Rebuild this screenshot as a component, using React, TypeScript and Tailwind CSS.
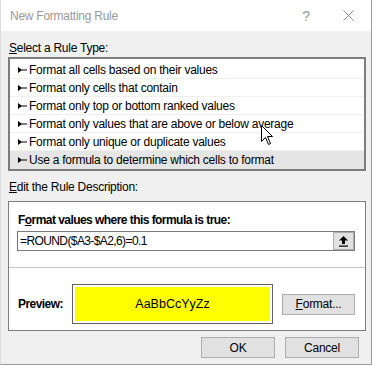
import React from "react";

const Bullet = () => (
  <svg width="9" height="6" viewBox="0 0 9 6" className="shrink-0">
    <polygon points="0,0 0,6 3.5,3.5 9,3.5 9,2.5 3.5,2.5" fill="#000" />
  </svg>
);

const rules = [
  "Format all cells based on their values",
  "Format only cells that contain",
  "Format only top or bottom ranked values",
  "Format only values that are above or below average",
  "Format only unique or duplicate values",
  "Use a formula to determine which cells to format",
];

export default function App() {
  return (
    <div
      className="w-[373px] h-[366px] bg-white overflow-hidden relative tracking-[-0.25px]"
      style={{ fontFamily: "'Liberation Sans', Arial, sans-serif" }}
    >
      <div className="w-[372px] h-[365px] flex flex-col border-l border-r border-b border-l-[#dcdcdc] border-r-[#9c9c9c] border-b-[#9c9c9c] bg-[#f0f0f0]">
        {/* Title bar */}
        <div className="h-[31px] bg-white flex items-center shrink-0">
          <div className="pl-[9px] text-[12px] text-[#999999] flex-1 leading-none">New Formatting Rule</div>
          <div className="w-[20px] text-center text-[14px] text-[#9a9a9a] mr-[27px] leading-none">?</div>
          <svg width="11" height="11" viewBox="0 0 11 11" className="mr-[17px]">
            <path d="M0.5,0.5 L10.5,10.5 M10.5,0.5 L0.5,10.5" stroke="#8a8a8a" strokeWidth="1" />
          </svg>
        </div>

        {/* Body */}
        <div className="flex flex-col px-[7px]">
          <div className="h-[26px] flex items-end pb-[3px] pl-[1px] text-[12px] text-black leading-none">
            <span><u>S</u>elect a Rule Type:</span>
          </div>
          <div className="w-[358px] border-2 border-[#7d7d7d] bg-white pt-[2px] pb-0">
            {rules.map((r, i) => (
              <div
                key={r}
                className={
                  "h-[18px] flex items-center gap-[2px] pl-[8px] text-[12px] text-black leading-none " +
                  (i === 5 ? "bg-[#e5e5e5]" : "border-b border-[#f0f0f0]")
                }
              >
                <Bullet />
                <span>{r}</span>
              </div>
            ))}
          </div>

          <div className="h-[30px] flex items-end pb-[8px] pl-[1px] text-[12px] text-black leading-none">
            <span><u>E</u>dit the Rule Description:</span>
          </div>

          <div className="w-[358px] h-[130px] border border-[#7d7d7d] bg-white flex flex-col">
            <div className="h-[29px] flex items-end pb-[5px] pl-[9px] text-[12px] font-bold text-black leading-none tracking-[-0.55px]">
              <span>F<u>o</u>rmat values where this formula is true:</span>
            </div>
            <div className="ml-[8px] w-[338px] h-[20px] border border-[#7a7a7a] flex items-center">
              <div className="flex-1 pl-[2px] text-[12px] text-black leading-none tracking-[-0.6px]">=ROUND($A3-$A2,6)=0.1</div>
              <div className="w-[21px] h-[18px] border border-[#adadad] bg-[#e1e1e1] flex items-center justify-center">
                <svg width="9" height="11" viewBox="0 0 9 11">
                  <polygon points="4.5,0 9,4.5 6,4.5 6,8 3,8 3,4.5 0,4.5" fill="#000" />
                  <rect x="0" y="9.5" width="9" height="1.2" fill="#000" />
                </svg>
              </div>
            </div>
            <div className="mt-[16px] h-px bg-[#c8c8c8]" />
            <div className="mt-[16px] flex items-center">
              <div className="w-[63px] pl-[9px] text-[12px] font-bold text-black leading-none tracking-[-0.55px]">Preview:</div>
              <div className="w-[201px] h-[40px] border border-[#646464] bg-white p-[2px]">
                <div className="w-full h-full bg-[#ffff00] flex items-center justify-center text-[12.5px] text-black leading-none tracking-normal">
                  AaBbCcYyZz
                </div>
              </div>
              <div className="ml-[9px] w-[73px] h-[21px] border border-[#adadad] bg-[#e1e1e1] flex items-center justify-center text-[12px] text-black leading-none">
                <span><u>F</u>ormat...</span>
              </div>
            </div>
          </div>

          <div className="mt-[6px] flex justify-end gap-[10px] pr-[5px]">
            <div className="w-[74px] h-[21px] border border-[#adadad] bg-[#e1e1e1] flex items-center justify-center text-[12px] text-black leading-none">
              OK
            </div>
            <div className="w-[74px] h-[21px] border border-[#adadad] bg-[#e1e1e1] flex items-center justify-center text-[12px] text-black leading-none">
              Cancel
            </div>
          </div>
        </div>
      </div>

      {/* Mouse cursor overlay */}
      <svg width="13" height="21" viewBox="0 0 13 21" className="absolute left-[261px] top-[125px]">
        <path
          d="M0.5,0.5 L0.5,16.5 L4.5,12.5 L7.5,19.5 L9.5,18.5 L6.5,11.5 L11.5,11.5 Z"
          fill="#fff"
          stroke="#000"
          strokeWidth="1"
          strokeLinejoin="miter"
        />
      </svg>
    </div>
  );
}
